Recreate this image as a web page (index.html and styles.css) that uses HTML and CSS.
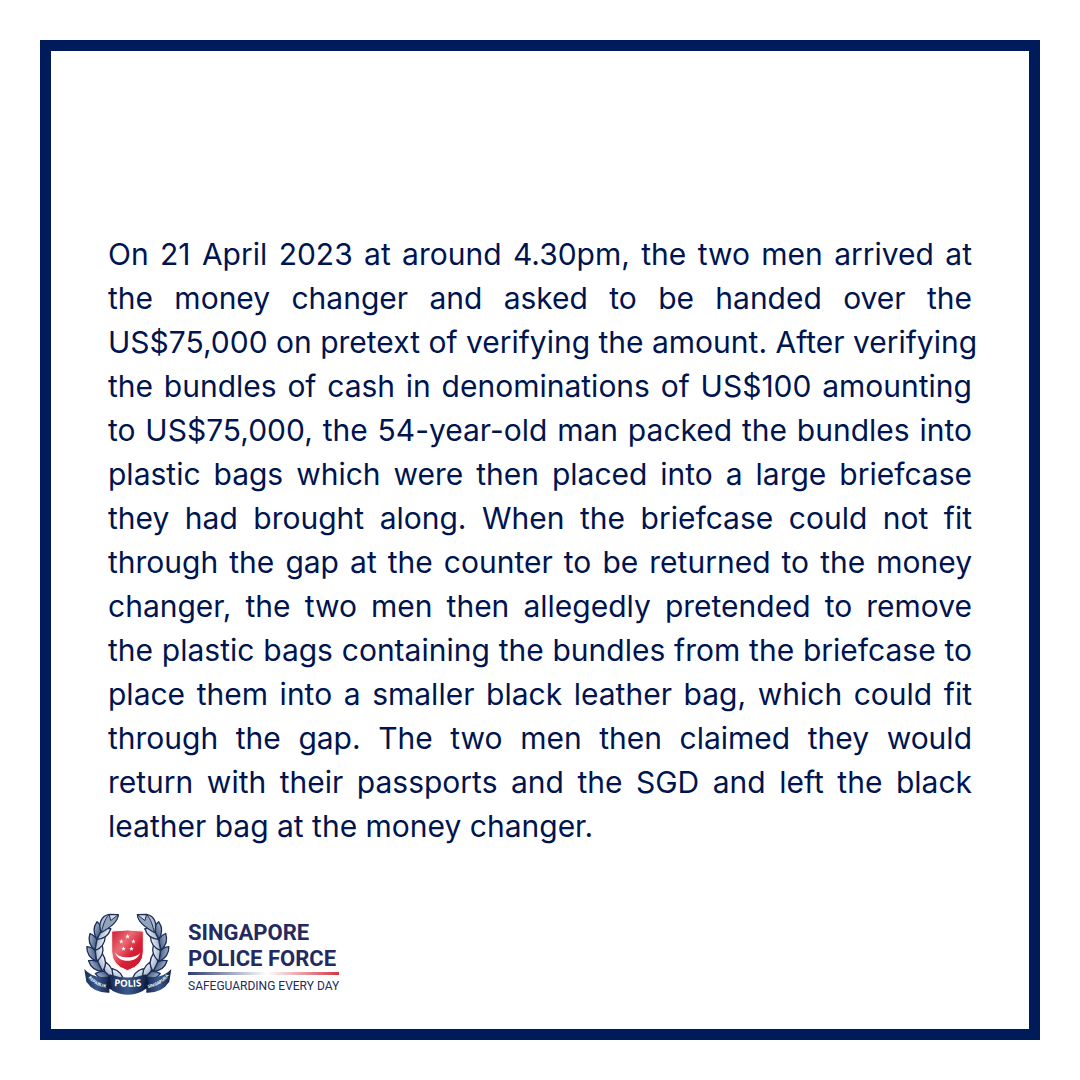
FILE: index.html
```html
<!DOCTYPE html>
<html lang="en">
<head>
<meta charset="utf-8">
<meta name="viewport" content="width=device-width, initial-scale=1">
<title>Singapore Police Force</title>
<link rel="stylesheet" href="styles.css">
</head>
<body>
<main class="frame">
  <p class="story">
    <span class="line">On 21 April 2023 at around 4.30pm, the two men arrived at</span>
    <span class="line">the money changer and asked to be handed over the</span>
    <span class="line">US$75,000 on pretext of verifying the amount. After verifying</span>
    <span class="line">the bundles of cash in denominations of US$100 amounting</span>
    <span class="line">to US$75,000, the 54-year-old man packed the bundles into</span>
    <span class="line">plastic bags which were then placed into a large briefcase</span>
    <span class="line">they had brought along. When the briefcase could not fit</span>
    <span class="line">through the gap at the counter to be returned to the money</span>
    <span class="line">changer, the two men then allegedly pretended to remove</span>
    <span class="line">the plastic bags containing the bundles from the briefcase to</span>
    <span class="line">place them into a smaller black leather bag, which could fit</span>
    <span class="line">through the gap. The two men then claimed they would</span>
    <span class="line">return with their passports and the SGD and left the black</span>
    <span class="line">leather bag at the money changer.</span>
  </p>
  <footer class="brand">
    <svg class="crest" viewBox="24 39 273 255" role="img" aria-label="Singapore Police Force crest">
      <defs>
        <linearGradient id="red" x1="0" y1="0" x2="1" y2="1">
          <stop offset="0" stop-color="#cf1b31"/><stop offset=".35" stop-color="#ea6a74"/><stop offset=".6" stop-color="#d81f35"/><stop offset="1" stop-color="#c5162c"/>
        </linearGradient>
        <linearGradient id="ribbon" x1="0" x2="1">
          <stop offset="0" stop-color="#182a54"/><stop offset=".5" stop-color="#3c598d"/><stop offset="1" stop-color="#142349"/>
        </linearGradient>
        <linearGradient id="light" x1="0" x2="1">
          <stop offset="0" stop-color="#a3b1c7"/><stop offset="1" stop-color="#eef2f7"/>
        </linearGradient>
        <linearGradient id="dark" x1="0" x2="1">
          <stop offset="0" stop-color="#a0afc6"/><stop offset="1" stop-color="#4a6089"/>
        </linearGradient>
        <g id="pair" stroke="#1c2e57" stroke-width="4" stroke-linejoin="round">
          <path fill="url(#dark)" d="M0 26C-15 17-28 4-24-22C-16-20-6-16 0-6Z"/>
          <path fill="url(#light)" d="M0 26C15 17 27 4 23-22C15-20 5-16 0-6Z"/>
        </g>
        <g id="branch">
          <use href="#pair" transform="translate(124 238) rotate(-66)"/>
          <use href="#pair" transform="translate(94 221) rotate(-46)"/>
          <use href="#pair" transform="translate(72 193) rotate(-26)"/>
          <use href="#pair" transform="translate(62 160) rotate(-7)"/>
          <use href="#pair" transform="translate(65 127) rotate(10)"/>
          <use href="#pair" transform="translate(78 96) rotate(27)"/>
          <path d="M79 98C69 71 79 48 103 43L131 44C129 66 108 81 79 98Z" fill="url(#light)" stroke="#1c2e57" stroke-width="4" stroke-linejoin="round"/>
          <path d="M79 98C86 75 88 61 103 43L108 62L131 44C129 66 108 81 79 98Z" fill="#92a3bc" stroke="#1c2e57" stroke-width="3" stroke-linejoin="round"/>
        </g>
        <path id="star" fill="#fff" d="M0-7L2-2L7-2L3 1L4 7L0 3L-4 7L-3 1L-7-2L-2-2Z"/>
      </defs>
      <use href="#branch"/>
      <use href="#branch" transform="translate(320 0) scale(-1 1)"/>
      <path d="M111 94Q159 87 207 94V157Q207 198 159 214Q111 198 111 157Z" fill="url(#red)" stroke="#fff" stroke-width="3"/>
      <path d="M122 158C128 193 190 193 198 158C190 177 132 180 122 158Z" fill="#fff"/>
      <use href="#star" x="159" y="110"/><use href="#star" x="140" y="125"/><use href="#star" x="177" y="125"/><use href="#star" x="147" y="147"/><use href="#star" x="171" y="147"/>
      <path d="M28 209Q54 240 104 231V281Q57 283 34 248Z" fill="url(#ribbon)"/>
      <path d="M292 209Q266 240 216 231V281Q263 283 286 248Z" fill="url(#ribbon)"/>
      <path d="M104 226L93 264L118 276ZM216 226L227 264L202 276Z" fill="#101d40"/>
      <path d="M104 225Q160 245 216 225L207 275Q160 299 113 275Z" fill="url(#ribbon)"/>
      <path id="mid" d="M104 259Q160 267 216 259" fill="none"/>
      <path id="left" d="M34 226Q51 260 104 268" fill="none"/>
      <path id="right" d="M214 268Q266 260 288 223" fill="none"/>
      <g class="crest-text">
        <text class="crest-main"><textPath href="#mid" startOffset="50%">POLIS</textPath></text>
        <text class="crest-side"><textPath href="#left" startOffset="50%">REPABLIK</textPath></text>
        <text class="crest-side"><textPath href="#right" startOffset="50%">SINGAPURA</textPath></text>
      </g>
    </svg>
    <div class="wordmark">
      <strong class="name">SINGAPORE<br>POLICE FORCE</strong>
      <span class="rule"></span>
      <span class="tagline">SAFEGUARDING EVERY DAY</span>
    </div>
  </footer>
</main>
</body>
</html>
```
FILE: styles.css
```css
* {
  box-sizing: border-box;
}

body {
  margin: 0;
  padding: 40px;
  min-height: 100vh;
  display: flex;
  background: #fff;
  color: #00144f;
  font-family: Inter, "Liberation Sans", sans-serif;
}

.frame {
  flex: 1;
  min-width: 0;
  display: flex;
  flex-direction: column;
  justify-content: flex-end;
  padding: 57px 57px 32px;
  border: 11px solid #001b5a;
}

.story {
  margin: 0 0 65px;
  font-size: 30px;
  line-height: 44px;
}

.line {
  display: block;
  text-align: justify;
  text-align-last: justify;
  white-space: nowrap;
}

.line:last-child {
  text-align-last: left;
}

@media (max-width: 1040px) {
  .line,
  .line:last-child {
    display: inline;
    white-space: normal;
  }
}

.brand {
  display: flex;
  align-items: center;
  gap: 15px;
  margin-left: -25px;
}

.crest {
  width: 90px;
  height: 84px;
}

.crest-text {
  fill: #fff;
  font-family: "Open Sans", sans-serif;
  font-weight: 700;
  text-anchor: middle;
}

.crest-main {
  font-size: 29px;
}

.crest-side {
  font-size: 13px;
}

.wordmark {
  display: flex;
  flex-direction: column;
  padding-top: 3px;
  color: #242a61;
}

.name {
  font-family: Roboto, sans-serif;
  font-size: 22px;
  line-height: 26px;
}

.rule {
  height: 3px;
  margin-bottom: 3px;
  background: linear-gradient(90deg, #2b3c74, #fff 52%, #d33643);
}

.tagline {
  font-family: Roboto, sans-serif;
  font-size: 12px;
  line-height: 16px;
}
```
